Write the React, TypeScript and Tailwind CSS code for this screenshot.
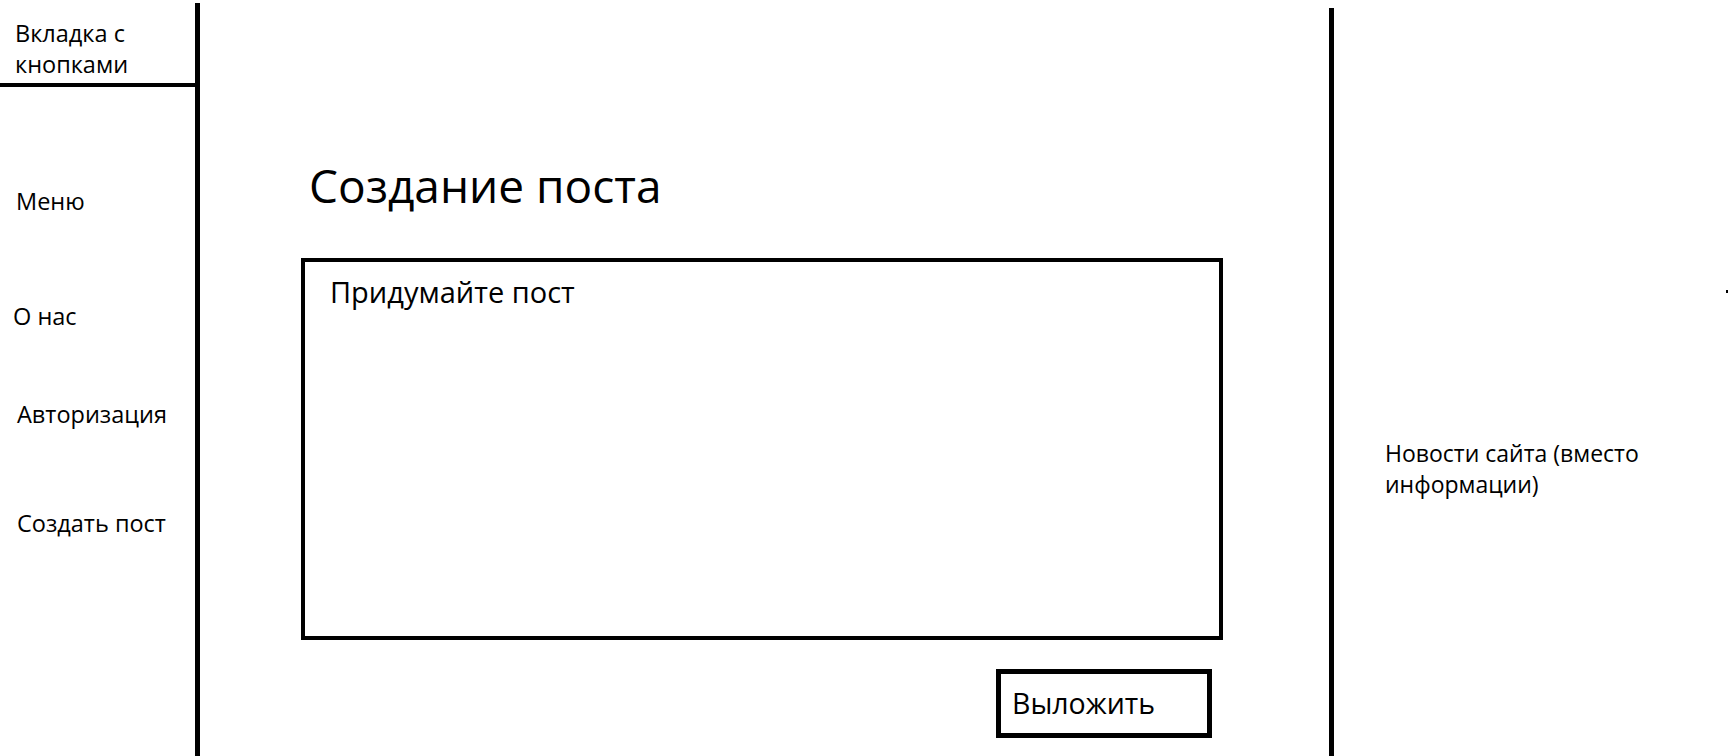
const menu = [
  { label: "Меню", cls: "mt-[99px] pl-[16px]" },
  { label: "О нас", cls: "mt-[84px] pl-[13px]" },
  { label: "Авторизация", cls: "mt-[67px] pl-[17px]" },
  { label: "Создать пост", cls: "mt-[78px] pl-[17px]" },
];

export default function App() {
  return (
    <main
      className="flex h-screen w-full overflow-hidden bg-white text-black"
      style={{ fontFamily: '"Open Sans", "Noto Sans", sans-serif' }}
    >
      {/* левая колонка */}
      <aside className="mt-[3px] flex w-[200px] shrink-0 flex-col border-r-[5px] border-black">
        <div className="h-[84px] border-b-4 border-black pl-[15px] pt-[15px] text-[23.5px] leading-[31px]">
          Вкладка с<br />
          кнопками
        </div>
        <nav className="flex flex-col text-[23.5px] leading-[31px]">
          {menu.map((m) => (
            <a key={m.label} href="#" className={m.cls}>
              {m.label}
            </a>
          ))}
        </nav>
      </aside>

      {/* центр */}
      <section className="w-[1129px] shrink-0 pl-[101px] pt-[162px]">
        <h1 className="pl-[8px] text-[46px] leading-none font-normal">Создание поста</h1>
        <div className="mt-[50px] flex w-[922px] flex-col">
          <textarea
            className="h-[382px] w-full resize-none border-4 border-black px-[25px] pt-[15px] text-[29px] leading-none outline-none placeholder:text-black"
            placeholder="Придумайте пост"
          />
          <button className="mt-[29px] mr-[11px] flex h-[69px] w-[216px] items-center self-end border-[5px] border-black pl-[11px] text-[28.5px] leading-none">
            Выложить
          </button>
        </div>
      </section>

      {/* правая колонка */}
      <aside className="relative mt-[8px] flex-1 border-l-[5px] border-black pl-[51px] pt-[430px]">
        <p className="w-[300px] text-[23px] leading-[31px]">Новости сайта (вместо информации)</p>
        <span className="absolute left-[392px] top-[282px] h-[3px] w-[2px] bg-black" />
      </aside>
    </main>
  );
}
